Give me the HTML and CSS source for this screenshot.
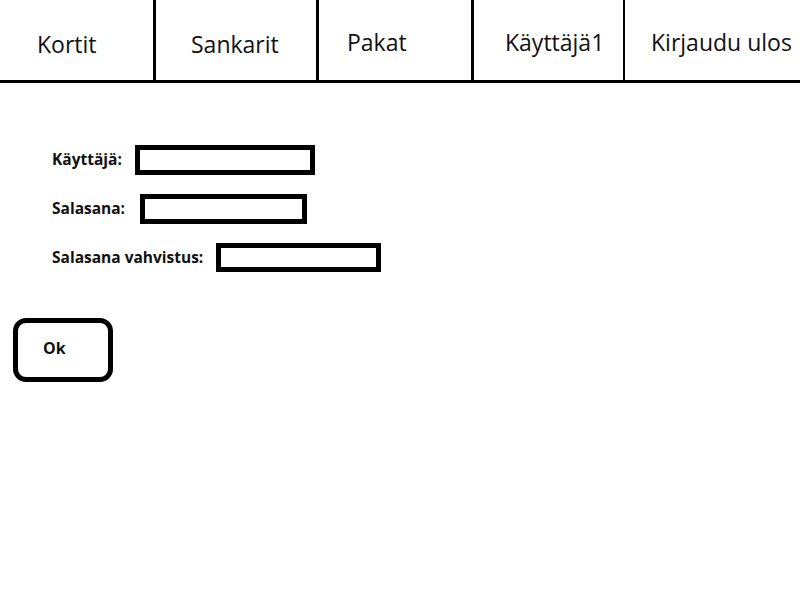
FILE: index.html
```html
<!DOCTYPE html>
<html lang="fi">
<head>
<meta charset="utf-8">
<title>Rekisteröidy</title>
<link rel="stylesheet" href="styles.css">
</head>
<body>
<nav class="nav">
  <a class="nav-item nav-kortit">Kortit</a>
  <a class="nav-item nav-sankarit">Sankarit</a>
  <a class="nav-item nav-pakat">Pakat</a>
  <a class="nav-item nav-user">Käyttäjä1</a>
  <a class="nav-item nav-logout">Kirjaudu ulos</a>
</nav>
<main class="main">
  <form class="form">
    <div class="fields">
      <label class="row">
        <span class="label">Käyttäjä:</span>
        <input class="field field-user" type="text">
      </label>
      <label class="row">
        <span class="label">Salasana:</span>
        <input class="field field-pass" type="password">
      </label>
      <label class="row">
        <span class="label">Salasana vahvistus:</span>
        <input class="field field-confirm" type="password">
      </label>
    </div>
    <button class="ok" type="button">Ok</button>
  </form>
</main>
</body>
</html>
```
FILE: styles.css
```css
* { box-sizing: border-box; }

html, body {
  margin: 0;
  padding: 0;
  background: #fff;
  color: #000;
  font-family: "Open Sans", "Liberation Sans", sans-serif;
}

.nav {
  display: flex;
  height: 83px;
  border-bottom: 3px solid #000;
}

.nav-item {
  display: block;
  height: 80px;
  font-size: 23px;
  line-height: 1;
  color: #111;
  text-decoration: none;
  border-right: 3px solid #000;
}

.nav-kortit   { width: 156px; padding: 33px 0 0 37px; }
.nav-sankarit { width: 163px; padding: 33px 0 0 35px; }
.nav-pakat    { width: 155px; padding: 31px 0 0 28px; }
.nav-user     { width: 151px; padding: 31px 0 0 31px; border-right-width: 2px; }
.nav-logout   { flex: 1; padding: 31px 0 0 26px; border-right: none; }

.main {
  padding: 62px 0 0 13px;
}

.form {
  display: flex;
  flex-direction: column;
  align-items: flex-start;
}

.fields {
  display: flex;
  flex-direction: column;
  gap: 19px;
  padding-left: 39px;
}

.row {
  display: flex;
  align-items: center;
  gap: 13px;
}

.label {
  font-weight: 700;
  font-size: 15.5px;
  line-height: 1;
  color: #111;
}

.field {
  display: block;
  height: 30px;
  margin: 0;
  padding: 0;
  border: 5px solid #000;
  border-radius: 0;
  background: #fff;
  outline: none;
}

.field-user    { width: 180px; }
.field-pass    { width: 167px; margin-left: 2px; }
.field-confirm { width: 165px; height: 29px; }

.ok {
  margin-top: 46px;
  width: 100px;
  height: 64px;
  padding: 0 0 4px 25px;
  border: 5px solid #000;
  border-radius: 13px;
  background: #fff;
  text-align: left;
  font-family: "Open Sans", "Liberation Sans", sans-serif;
  font-weight: 700;
  font-size: 16px;
  color: #111;
}
```
